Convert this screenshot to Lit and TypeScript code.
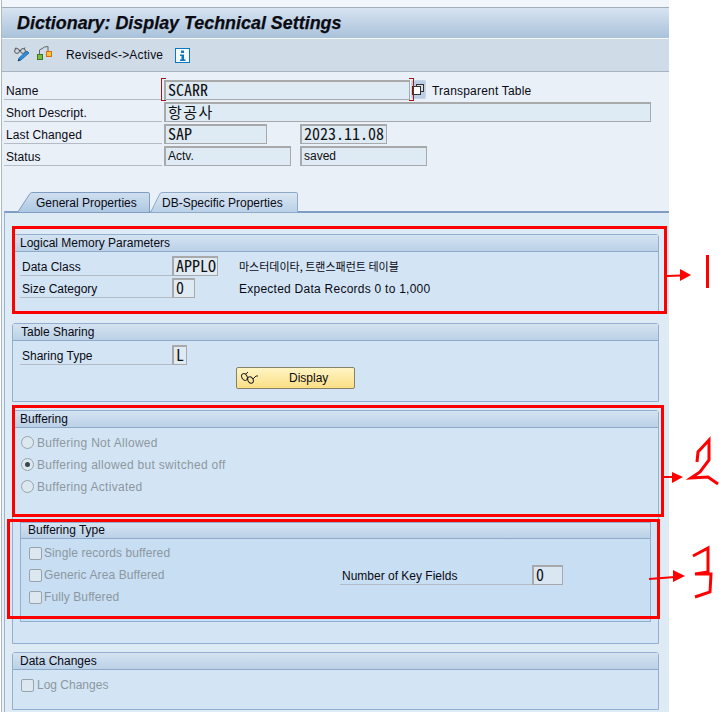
import { LitElement, html, css, svg } from "lit";
import { customElement } from "lit/decorators.js";

const FONT = css`"Liberation Sans", "Noto Sans CJK KR", sans-serif`;

const tabShape = (id: string, w: number, slope: number, top: string, bottom: string, line: string) => html`
  <svg class="tab-bg" width=${w} height="21" viewBox="0 0 ${w} 21">
    <defs>
      <linearGradient id=${id} x1="0" y1="0" x2="0" y2="1">
        <stop offset="0" stop-color=${top}></stop>
        <stop offset="1" stop-color=${bottom}></stop>
      </linearGradient>
    </defs>
    <path d="M0.5 20.5 L${slope} 1.5 Q${slope + 1} 0.5 ${slope + 3} 0.5 L${w - 2} 0.5 Q${w - 0.5} 0.5 ${w - 0.5} 2 L${w - 0.5} 20.5 Z"
      fill="url(#${id})" stroke=${line}></path>
  </svg>`;

@customElement("app-root")
export class AppRoot extends LitElement {
  static styles = css`
    :host { display: block; position: relative; width: 719px; height: 712px; overflow: hidden; background: #fff;
      font-family: ${FONT}; font-size: 12px; color: #0a0a14; }
    .window { width: 667px; height: 712px; margin-left: 1px; border-left: 1px solid #aeb9c6; background: #e9f0f7;
      display: flex; flex-direction: column; }
    .topband { height: 7px; flex: none; background: #f2f5fa; border-bottom: 1px solid #a3aebd; }
    .title { height: 30px; flex: none; border-bottom: 1px solid #f4f7fb; background: linear-gradient(#d7e3f1, #a9c2da);
      display: flex; align-items: center; padding-left: 15px; font-size: 17.9px; font-weight: bold; font-style: italic; color: #0b0b12;
      -webkit-text-stroke: .25px #0b0b12; }
    .toolbar { height: 32px; flex: none; background: #cfdce7; border-bottom: 1px solid #a7b3c1; display: flex; align-items: center; }
    .tb-icon { display: block; flex: none; }
    .tb-edit { margin-left: 11px; }
    .tb-compare { margin-left: 6px; }
    .tb-text { margin-left: 11px; width: 109px; letter-spacing: .2px; }
    .form { padding-top: 8px; flex: none; }
    .row { display: flex; align-items: flex-start; height: 20px; margin-bottom: 2px; position: relative; }
    .form .lbl { width: 158px; margin-left: 2px; padding-left: 2px; letter-spacing: .1px; }
    .lbl { box-sizing: border-box; height: 20px; line-height: 22px; border-bottom: 1px solid #b3bcc6; flex: none; }
    .fld { box-sizing: border-box; height: 20px; flex: none; border: 2px solid #a7a9ab; border-right-width: 1px; border-bottom-width: 1px;
      background: #deeaf4; font-family: "Noto Sans Mono CJK KR", "Liberation Mono", monospace; font-size: 16px; line-height: 15px; padding-left: 2px; color: #111; }
    .txt { font-family: ${FONT}; font-size: 12px; line-height: 17px; }
    .w246 { width: 246px; margin-left: 2px; }
    .w487 { width: 487px; margin-left: 2px; }
    .w103 { width: 103px; margin-left: 2px; }
    .w127 { width: 127px; margin-left: 2px; }
    .w87 { width: 87px; margin-left: 33px; }
    .w127b { width: 127px; margin-left: 9px; }
    .ko { font-family: "Noto Sans CJK KR", sans-serif; font-size: 15px; line-height: 16px; letter-spacing: 1.5px; }
    .corner { position: absolute; top: -2px; width: 5px; height: 23px; border: 1px solid #a51616; box-sizing: border-box; }
    .corner.l { left: 159px; border-right: 0; }
    .corner.r { left: 407px; border-left: 0; }
    .copy { flex: none; display: block; margin-left: 1px; }
    .ttype { margin-left: 6px; line-height: 22px; letter-spacing: .2px; }
    .tabs { flex: none; display: flex; margin-top: 24px; height: 19px; padding-left: 15px; position: relative; z-index: 1; }
    .tab { position: relative; height: 19px; line-height: 23px; box-sizing: border-box; }
    .tab-bg { position: absolute; left: 0; top: 0; }
    .tab span { position: relative; }
    .tab1 { width: 133px; padding-left: 19px; }
    .tab2 { width: 148px; padding-left: 12px; }
    .panel { flex: 1; margin-left: 2px; border-left: 1px solid #9ab3d0; border-top: 2px solid #7f9dc2; background: #deeaf4;
      padding: 21px 10px 0 7px; min-height: 0; }
    .group { border: 1px solid #92aed0; border-radius: 3px 3px 0 0; background: #d3e5f4; box-sizing: border-box; margin-bottom: 8px; }
    .group .head { box-sizing: border-box; height: 17px; line-height: 16px; border-bottom: 1px solid #8fa9c9; padding-left: 7px;
      background: linear-gradient(#d5e3f1, #bad1e7); }
    .g1 { height: 80px; margin-bottom: 9px; }
    .g2 { height: 79px; }
    .g2 .head { padding-left: 8px; }
    .g3 { height: 234px; }
    .g4 { height: 58px; margin-bottom: 0; }
    .body { padding: 4px 0 0 7px; }
    .body .lbl { width: 152px; padding-left: 2px; }
    .body .fld { background: #e0eaf3; }
    .f46 { width: 46px; } .f23 { width: 23px; } .f15 { width: 15px; }
    .note { margin-left: 21px; line-height: 22px; letter-spacing: .25px; }
    .note.ko2 { font-family: "Noto Sans CJK KR", sans-serif; font-size: 11px; letter-spacing: 0; line-height: 20px; }
    .note.wide { margin-left: 44px; }
    .btn { display: flex; align-items: center; box-sizing: border-box; width: 119px; height: 22px; margin: 1px 0 0 216px; padding: 0;
      border: 1px solid #86826a; border-radius: 2px; background: linear-gradient(#fff4c4, #fbdf85); font: inherit; color: inherit; }
    .btn svg { flex: none; margin-left: 3px; display: block; }
    .btn span { margin-left: 29px; }
    .choices { padding: 3px 0 0 8px; }
    .choice { display: flex; align-items: center; height: 22px; color: #8d979f; letter-spacing: .1px; }
    .radio-choice { letter-spacing: .3px; }
    .radio-choice span.t { position: relative; top: 1px; }
    .radio { box-sizing: border-box; width: 13px; height: 13px; border-radius: 50%; border: 1px solid #99a3ab; background: #dce7f0; margin-right: 3px;
      display: flex; align-items: center; justify-content: center; flex: none; }
    .radio i { width: 5px; height: 5px; border-radius: 50%; background: #3c4650; display: block; }
    .check { box-sizing: border-box; width: 13px; height: 13px; border-radius: 2px; border: 1px solid #99a3ab; background: #dce7f0; margin-right: 2px; flex: none; }
    .nested { height: 100px; margin: 25px 7px 0 7px; background: #c7def3; border-radius: 0; border-width: 1px; }
    .nested .head { height: 16px; line-height: 15px; }
    .ngrid { display: grid; grid-template-columns: 311px auto; grid-template-rows: 22px 22px 22px; padding: 3px 0 0 8px; }
    .keyrow { grid-column: 2; grid-row: 2; display: flex; height: 20px; align-self: center; }
    .keyrow .lbl { width: 192px; padding-left: 2px; }
    .nested .keyrow .fld { width: 31px; background: #dae7f2; }
    .c2 { grid-column: 1; }
    .g4 .choices { padding: 4px 0 0 8px; }
    .g4 .choice { letter-spacing: 0; }
    .g4 .check { margin-right: 3px; }
    .marks { position: absolute; left: 0; top: 0; pointer-events: none; display: block; }
  `;

  render() {
    return html`
      <div class="window">
        <div class="topband"></div>
        <div class="title">Dictionary: Display Technical Settings</div>
        <div class="toolbar">
          <svg class="tb-icon tb-edit" width="18" height="18" viewBox="0 0 18 18" fill="none">
            <circle cx="4" cy="5" r="2.4" stroke="#555"></circle><circle cx="10" cy="5" r="2.4" stroke="#555"></circle>
            <path d="M6 4.500h2M2 3l1-1.500M11 3l1-1.500" stroke="#555"></path>
            <path d="M5 15l1-3 8-7 2 2-8 7z" fill="#2f8fdc" stroke="#1d5f9c" stroke-width=".8"></path>
            <path d="M5 15l1-2 1 1.200z" fill="#123"></path>
          </svg>
          <svg class="tb-icon tb-compare" width="18" height="18" viewBox="0 0 18 18" fill="none">
            <rect x=".5" y="8.500" width="5" height="5" fill="#7fbb3e" stroke="#3a7a22"></rect>
            <rect x="9.500" y="5.500" width="5" height="5" fill="#f6c53a" stroke="#dd6c14"></rect>
            <path d="M2.500 8V4L6 2l1.500-1L11 .5V5" stroke="#666"></path>
          </svg>
          <span class="tb-text">Revised&lt;-&gt;Active</span>
          <svg class="tb-icon" width="15" height="15" viewBox="0 0 15 15">
            <rect x=".5" y=".5" width="14" height="14" fill="#f4fafe" stroke="#0b78bf"></rect>
            <rect x="6" y="2.500" width="3" height="2.500" fill="#0b78bf"></rect>
            <path d="M5 6.500h4v5h1.500v1.500h-5.500v-1.500h1.500v-3.500h-1.500z" fill="#0b78bf"></path>
          </svg>
        </div>

        <div class="form">
          <div class="row">
            <span class="corner l"></span><span class="corner r"></span>
            <div class="lbl">Name</div>
            <div class="fld w246">SCARR</div>
            <svg class="copy" width="15" height="19" viewBox="0 0 15 19">
              <rect x=".5" y=".5" width="14" height="18" rx="1" fill="#b9cee6" stroke="#c8d6e4"></rect>
              <rect x="5.500" y="4.500" width="7" height="7" fill="#d8dde4" stroke="#333"></rect>
              <rect x="1.500" y="6.500" width="8" height="8" fill="#fff" stroke="#333"></rect>
            </svg>
            <div class="ttype">Transparent Table</div>
          </div>
          <div class="row">
            <div class="lbl">Short Descript.</div>
            <div class="fld w487 ko">항공사</div>
          </div>
          <div class="row">
            <div class="lbl">Last Changed</div>
            <div class="fld w103">SAP</div>
            <div class="fld w87">2023.11.08</div>
          </div>
          <div class="row">
            <div class="lbl">Status</div>
            <div class="fld w127 txt">Actv.</div>
            <div class="fld w127b txt">saved</div>
          </div>
        </div>

        <div class="tabs">
          <div class="tab tab1">${tabShape("t1", 133, 13, "#d0dfef", "#adc8e2", "#7f9dc2")}<span>General Properties</span></div>
          <div class="tab tab2">${tabShape("t2", 148, 10, "#dbe7f3", "#b9d0e7", "#8fa9c9")}<span>DB-Specific Properties</span></div>
        </div>

        <div class="panel">
          <section class="group g1">
            <div class="head">Logical Memory Parameters</div>
            <div class="body">
              <div class="row"><div class="lbl">Data Class</div><div class="fld f46">APPLO</div>
                <div class="note ko2">마스터데이타, 트랜스패런트 테이블</div></div>
              <div class="row"><div class="lbl">Size Category</div><div class="fld f23">0</div>
                <div class="note wide">Expected Data Records 0 to 1,000</div></div>
            </div>
          </section>

          <section class="group g2">
            <div class="head">Table Sharing</div>
            <div class="body">
              <div class="row"><div class="lbl">Sharing Type</div><div class="fld f15">L</div></div>
              <button class="btn">
                <svg width="20" height="14" viewBox="0 0 20 14" fill="none" stroke="#222">
                  <ellipse cx="4.500" cy="6" rx="2.600" ry="3.600" transform="rotate(-30 4.500 6)"></ellipse>
                  <ellipse cx="10.500" cy="9" rx="2.600" ry="3.400" transform="rotate(-30 10.500 9)"></ellipse>
                  <path d="M7 7.500l1 1M6 3l2-2M13 8l3-3h2"></path>
                </svg>
                <span>Display</span>
              </button>
            </div>
          </section>

          <section class="group g3">
            <div class="head">Buffering</div>
            <div class="choices">
              <div class="choice radio-choice"><span class="radio"></span><span class="t">Buffering Not Allowed</span></div>
              <div class="choice radio-choice"><span class="radio"><i></i></span><span class="t">Buffering allowed but switched off</span></div>
              <div class="choice radio-choice"><span class="radio"></span><span class="t">Buffering Activated</span></div>
            </div>
            <section class="group nested">
              <div class="head">Buffering Type</div>
              <div class="ngrid">
                <div class="choice c2"><span class="check"></span>Single records buffered</div>
                <div class="choice c2"><span class="check"></span>Generic Area Buffered</div>
                <div class="keyrow"><div class="lbl">Number of Key Fields</div><div class="fld">0</div></div>
                <div class="choice c2"><span class="check"></span>Fully Buffered</div>
              </div>
            </section>
          </section>

          <section class="group g4">
            <div class="head">Data Changes</div>
            <div class="choices">
              <div class="choice"><span class="check"></span>Log Changes</div>
            </div>
          </section>
        </div>
      </div>

      <svg class="marks" width="719" height="712" viewBox="0 0 719 712" fill="none" stroke="#ff0000" stroke-width="3">
        ${svg`
          <rect x="13.500" y="227.500" width="652" height="85"></rect>
          <rect x="13.500" y="406.500" width="649" height="109"></rect>
          <rect x="8.500" y="520.500" width="650" height="97"></rect>
          <path d="M667 276L681 275.500" stroke-width="2"></path>
          <path d="M680 269L691 275L680 281Z" fill="#ff0000" stroke="none"></path>
          <rect x="706" y="255" width="3" height="33" fill="#ff0000" stroke="none"></rect>
          <path d="M664 477H673" stroke-width="2"></path>
          <path d="M672 472L683 477L672 483Z" fill="#ff0000" stroke="none"></path>
          <path d="M697 462L698 452L709 440V460L700 472L691 478L708 477L718 484" stroke-width="3"></path>
          <path d="M649 579L675 577" stroke-width="2"></path>
          <path d="M673 570L685 576L673 582Z" fill="#ff0000" stroke="none"></path>
          <path d="M693 556L708 548V572L695 574H711L710 592L695 597" stroke-width="3"></path>
        `}
      </svg>
    `;
  }
}
